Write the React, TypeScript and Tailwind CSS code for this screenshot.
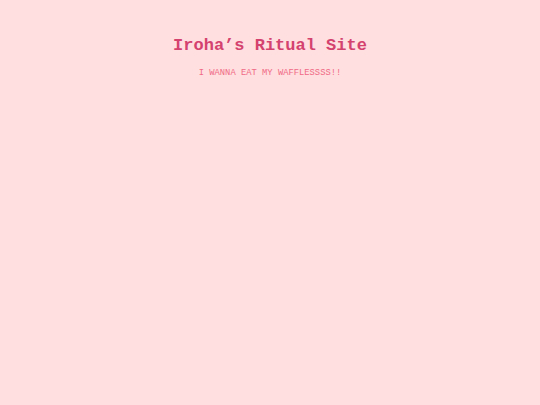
export default function App() {
  return (
    <div className="min-h-[405px] w-full bg-[#ffdfdf] flex flex-col items-center pt-[36px]" style={{ fontFamily: '"Courier New", Courier, "Liberation Mono", monospace' }}>
      <h1 className="text-[17px] leading-[20px] font-bold text-[#d4426f]">Iroha’s Ritual Site</h1>
      <p className="mt-[12px] text-[8.8px] leading-[11px] text-[#f06a86]">I WANNA EAT MY WAFFLESSSS!!</p>
    </div>
  );
}
